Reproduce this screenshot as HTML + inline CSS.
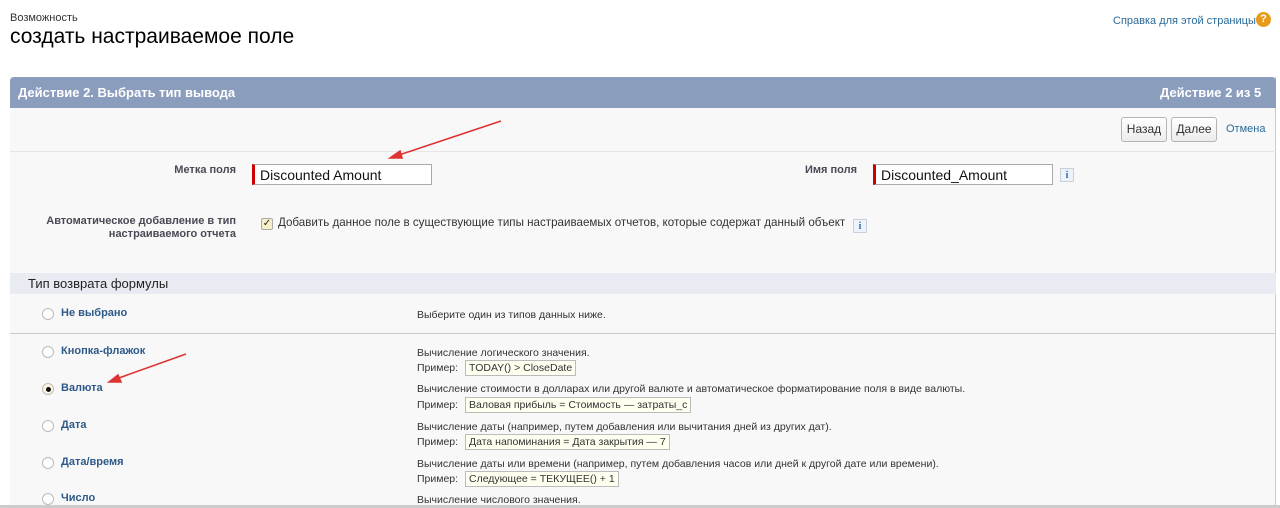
<!DOCTYPE html>
<html><head><meta charset="utf-8"><style>
*{box-sizing:border-box;margin:0;padding:0}
body{width:1280px;height:508px;overflow:hidden;background:#fff;font-family:"Liberation Sans",sans-serif;color:#333;position:relative}
.a{position:absolute;white-space:nowrap}
.lbl{font-size:11px;font-weight:bold;color:#4a4a56;text-align:right}
.inp{position:absolute;height:21px;border:1px solid #aaa;border-left:3px solid #c00;background:#fff;font-size:14px;color:#111;padding:2px 0 0 5px}
.btn{position:absolute;height:25px;border:1px solid #b5b5b5;border-radius:3px;background:linear-gradient(#fff,#ececec);font-size:12px;color:#333;text-align:center;line-height:23px}
.info{position:absolute;width:14px;height:14px;border:1px solid #c8d0dc;background:#eef3fa;color:#2a6fb5;font:bold 10px "Liberation Serif",serif;text-align:center;line-height:13px}
.radio{position:absolute;width:12px;height:12px;border:1px solid #bbb;border-radius:50%;background:#fff;left:42px}
.rl{position:absolute;left:61px;font-size:11px;font-weight:bold;color:#2e5a8a}
.d{position:absolute;left:417px;font-size:10.5px;color:#333}
.ex{position:absolute;left:417px;font-size:10.5px;color:#333}
.ex span{display:inline-block;border:1px solid #bbb;background:#fffff0;padding:1px 3px;margin-left:4px}
</style></head><body>
<div class="a" style="left:10px;top:12px;font-size:11px;color:#333">Возможность</div>
<div class="a" style="left:10px;top:25px;font-size:21px;color:#000">создать настраиваемое поле</div>
<div class="a" style="left:1113px;top:15px;font-size:11px;color:#2a6a9a">Справка для этой страницы</div>
<div class="a" style="left:1256px;top:12px;width:15px;height:15px;border-radius:50%;background:#e89a1a;color:#fff;font-size:11px;font-weight:bold;text-align:center;line-height:15px">?</div>

<div class="a" style="left:10px;top:77px;width:1266px;height:431px;background:#f8f8f8;border-right:1px solid #ccc"></div>
<div class="a" style="left:10px;top:77px;width:1266px;height:31px;background:#8b9dbd;border-radius:4px 4px 0 0"></div>
<div class="a" style="left:18px;top:85px;font-size:13px;font-weight:bold;color:#fff">Действие 2. Выбрать тип вывода</div>
<div class="a" style="left:1160px;top:85px;font-size:13px;font-weight:bold;color:#fff">Действие 2 из 5</div>
<div class="btn" style="left:1121px;top:117px;width:46px">Назад</div>
<div class="btn" style="left:1171px;top:117px;width:46px">Далее</div>
<div class="a" style="left:1226px;top:123px;font-size:11px;color:#2a6a9a">Отмена</div>
<div class="a" style="left:10px;top:151px;width:1266px;height:1px;background:#e6e6e6"></div>

<div class="a lbl" style="left:100px;top:164px;width:136px">Метка поля</div>
<div class="inp" style="left:252px;top:164px;width:180px">Discounted Amount</div>
<div class="a lbl" style="left:740px;top:164px;width:117px">Имя поля</div>
<div class="inp" style="left:873px;top:164px;width:180px">Discounted_Amount</div>
<div class="info" style="left:1060px;top:168px">i</div>

<div class="a lbl" style="left:30px;top:215px;width:206px;line-height:13px">Автоматическое добавление в тип<br>настраиваемого отчета</div>
<div class="a" style="left:261px;top:218px;width:12px;height:12px;border:1px solid #aaa;background:#f7efc8;border-radius:2px;font-size:10px;line-height:10px;text-align:center;color:#222">✓</div>
<div class="a" style="left:278px;top:216px;font-size:11.6px;color:#333">Добавить данное поле в существующие типы настраиваемых отчетов, которые содержат данный объект</div>
<div class="info" style="left:853px;top:219px">i</div>

<div class="a" style="left:10px;top:273px;width:1266px;height:21px;background:#e8ebf1"></div>
<div class="a" style="left:28px;top:276px;font-size:13px;color:#222">Тип возврата формулы</div>

<div class="radio" style="top:308px"></div><div class="rl" style="top:307px">Не выбрано</div>
<div class="d" style="top:309px">Выберите один из типов данных ниже.</div>
<div class="a" style="left:10px;top:333px;width:1266px;height:1px;background:#c5c9d0"></div>

<div class="radio" style="top:346px"></div><div class="rl" style="top:345px">Кнопка-флажок</div>
<div class="d" style="top:347px">Вычисление логического значения.</div>
<div class="ex" style="top:360px">Пример: <span>TODAY() &gt; CloseDate</span></div>

<div class="radio" style="top:383px;background:#fff8e0"><div style="width:5px;height:5px;border-radius:50%;background:#111;margin:2.5px"></div></div><div class="rl" style="top:382px">Валюта</div>
<div class="d" style="top:383px">Вычисление стоимости в долларах или другой валюте и автоматическое форматирование поля в виде валюты.</div>
<div class="ex" style="top:397px">Пример: <span>Валовая прибыль = Стоимость — затраты_c</span></div>

<div class="radio" style="top:420px"></div><div class="rl" style="top:419px">Дата</div>
<div class="d" style="top:421px">Вычисление даты (например, путем добавления или вычитания дней из других дат).</div>
<div class="ex" style="top:434px">Пример: <span>Дата напоминания = Дата закрытия — 7</span></div>

<div class="radio" style="top:457px"></div><div class="rl" style="top:456px">Дата/время</div>
<div class="d" style="top:458px">Вычисление даты или времени (например, путем добавления часов или дней к другой дате или времени).</div>
<div class="ex" style="top:471px">Пример: <span>Следующее = ТЕКУЩЕЕ() + 1</span></div>

<div class="radio" style="top:493px"></div><div class="rl" style="top:492px">Число</div>
<div class="d" style="top:494px">Вычисление числового значения.</div>
<div class="a" style="left:0;top:505px;width:1280px;height:3px;background:#ccc"></div>

<svg class="a" style="left:0;top:0" width="1280" height="508">
<g stroke="#d33" stroke-width="1.6" fill="#d33">
<line x1="501" y1="121" x2="396" y2="156"/><polygon points="390,158 400,151 402,158"/>
<line x1="186" y1="354" x2="116" y2="379"/><polygon points="109,382 118,375 121,382"/>
</g></svg>
</body></html>
